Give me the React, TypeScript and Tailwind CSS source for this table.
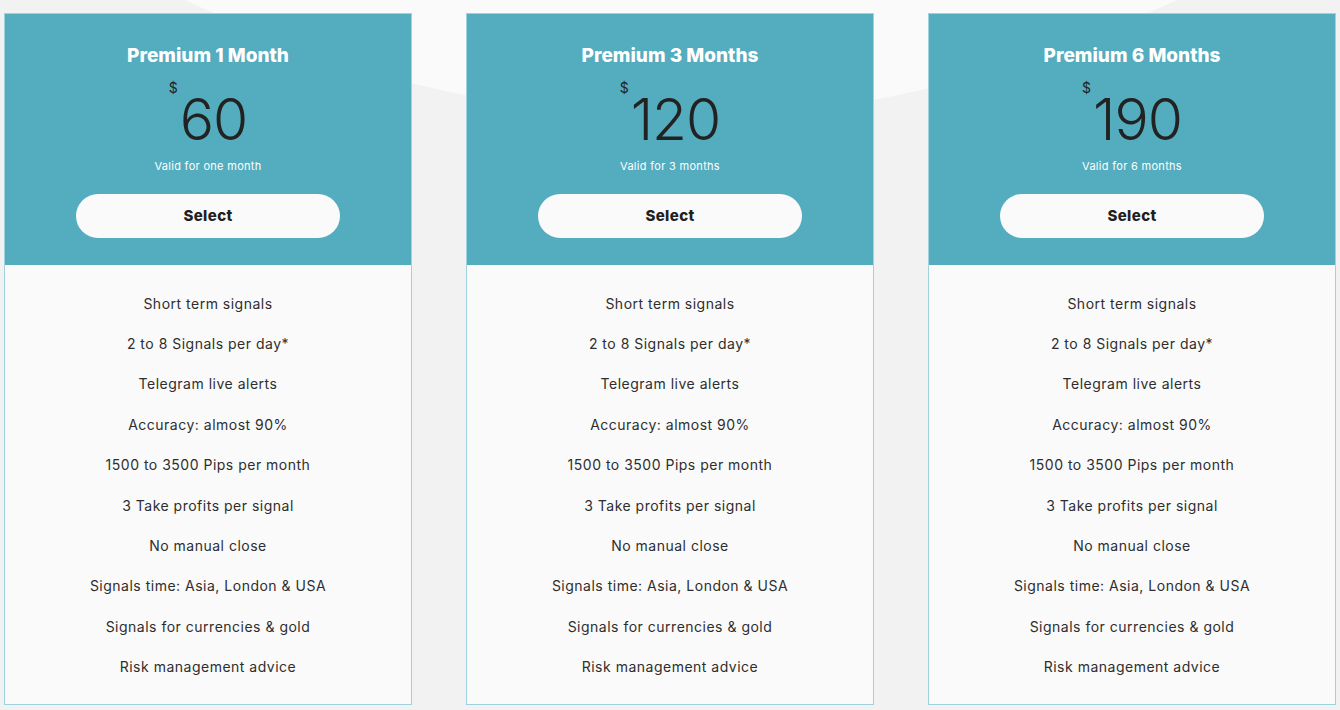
import React from "react";

interface Plan {
  title: string;
  price: string;
  note: string;
}

const plans: Plan[] = [
  { title: "Premium 1 Month", price: "60", note: "Valid for one month" },
  { title: "Premium 3 Months", price: "120", note: "Valid for 3 months" },
  { title: "Premium 6 Months", price: "190", note: "Valid for 6 months" },
];

const features = [
  "Short term signals",
  "2 to 8 Signals per day*",
  "Telegram live alerts",
  "Accuracy: almost 90%",
  "1500 to 3500 Pips per month",
  "3 Take profits per signal",
  "No manual close",
  "Signals time: Asia, London & USA",
  "Signals for currencies & gold",
  "Risk management advice",
];

function PlanCard({ plan }: { plan: Plan }) {
  return (
    <div className="flex flex-col border border-[#9fd2de] bg-[#fafafa]">
      {/* header */}
      <div className="flex flex-col items-center bg-[#54acbf] pt-[30px] pb-[27px]">
        <h3 className="text-[19px] leading-[24px] font-extrabold text-white">
          {plan.title}
        </h3>
        <div className="mt-[13px] flex items-start gap-[2px] text-[#222]">
          <span className="text-[14px] leading-none font-normal">$</span>
          <span className="mt-[10px] text-[57px] leading-none font-light tracking-[-1px]">
            {plan.price}
          </span>
        </div>
        <p className="mt-[10px] text-[11px] leading-[16px] tracking-[0.3px] text-white">
          {plan.note}
        </p>
        <button className="mt-[20px] h-[44px] w-[264px] rounded-full bg-[#fafafa] text-[15px] font-extrabold tracking-[0.4px] text-[#1f1f1f]">
          Select
        </button>
      </div>

      {/* features */}
      <ul className="flex flex-col items-center pt-[18px] pb-[17px]">
        {features.map((f) => (
          <li
            key={f}
            className="flex h-[40.4px] items-center text-[14px] text-[#2e2e2e] tracking-[0.5px]"
          >
            {f}
          </li>
        ))}
      </ul>
    </div>
  );
}

export default function App() {
  return (
    <div
      className="relative min-h-[710px] w-full overflow-hidden bg-[#f2f2f2]"
      style={{ fontFamily: "Inter, 'Noto Sans', sans-serif" }}
    >
      <svg
        className="pointer-events-none absolute inset-0"
        width="1340"
        height="710"
        viewBox="0 0 1340 710"
      >
        <path d="M185 0 Q681 235 1177 0 Z" fill="#fafafa" />
      </svg>
      <div className="relative grid grid-cols-3 gap-[54px] px-[4px] pt-[13px]">
        {plans.map((p) => (
          <PlanCard key={p.title} plan={p} />
        ))}
      </div>
    </div>
  );
}
